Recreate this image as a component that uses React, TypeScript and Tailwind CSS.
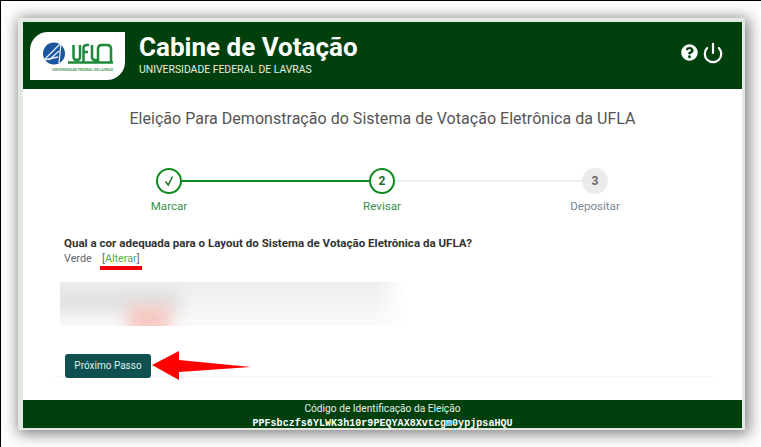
/**
 * Cabine de Votação: passo "Revisar"
 */

import { Power } from 'lucide-react'
import { FaQuestionCircle } from 'react-icons/fa'

function Logo() {
  return (
    <div className="w-[95px] h-[48px] bg-white rounded-tl-[18px] rounded-br-[18px] shrink-0">
      <svg width="95" height="48" viewBox="0 0 95 48">
        <circle cx="24" cy="21.5" r="11" fill="#1a559f" />
        <path d="M14 28 L31 11 L29 31 M19 28 L29 19 M14 28 L28 25" fill="none" stroke="#e8f0f8" strokeWidth="1.3" />
        <path
          d="M43.5 13 V25 Q43.5 28 47 28 Q50 28 50 25 V13 M53.5 30 V16 Q53.5 13 57 13 H59 M53.5 20 H58 M62 13 V25 Q62 28 65 28 H68 V17 Q68 13 72 13 H77 Q81 13 81 17 V30 M38 30.5 H83"
          fill="none"
          stroke="#1c8a3a"
          strokeWidth="2.5"
        />
        <text
          x="22"
          y="38.5"
          fontSize="4"
          fontWeight="700"
          textLength="61"
          lengthAdjust="spacingAndGlyphs"
          fontFamily="Roboto, sans-serif"
          fill="#4f9a5e"
        >
          UNIVERSIDADE FEDERAL DE LAVRAS
        </text>
      </svg>
    </div>
  )
}

function Header() {
  return (
    <header className="h-[67px] bg-[#00400c] flex items-center pl-[7px] pr-[18px] text-white">
      <Logo />
      <div className="ml-[14px] -mt-[3px]">
        <div className="text-[26px] leading-[30px] font-bold">Cabine de Votação</div>
        <div className="mt-[2px] text-[10.4px] leading-[12px] text-[#e6efe6]">UNIVERSIDADE FEDERAL DE LAVRAS</div>
      </div>
      <div className="ml-auto flex items-center gap-[4px] -mt-[6px]">
        <FaQuestionCircle className="w-[17px] h-[17px]" />
        <Power className="w-[22px] h-[22px]" strokeWidth={2.4} />
      </div>
    </header>
  )
}

function Stepper() {
  return (
    <div className="mt-[39px]">
      <div className="flex items-center pl-[133px]">
        <div className="w-[26px] h-[26px] rounded-full border-2 border-[#0f8a1f] flex items-center justify-center">
          <svg width="12" height="12" viewBox="0 0 12 12">
            <path d="M2.5 6.5 L5.2 10 L9.5 1.5" fill="none" stroke="#1b7a2e" strokeWidth="1.5" />
          </svg>
        </div>
        <div className="w-[187px] h-[2px] bg-[#0f8a1f]" />
        <div className="w-[26px] h-[26px] rounded-full border-2 border-[#0f8a1f] flex items-center justify-center text-[12px] font-bold text-[#1b6b2a]">
          2
        </div>
        <div className="w-[187px] h-[2px] bg-[#eeeeee]" />
        <div className="w-[26px] h-[26px] rounded-full bg-[#ebebeb] flex items-center justify-center text-[12px] font-bold text-[#6b6b6b]">
          3
        </div>
      </div>
      <div className="grid grid-cols-[213px_213px_213px] pl-[39.5px] mt-[5px] text-[11.6px] leading-[14px] text-center">
        <div className="text-[#3b8f4a]">Marcar</div>
        <div className="text-[#3b8f4a]">Revisar</div>
        <div className="text-[#7a8790]">Depositar</div>
      </div>
    </div>
  )
}

function BlurredBlock() {
  return (
    <div className="relative ml-[37px] mt-[12px] w-[345px] h-[44px] overflow-hidden bg-gradient-to-b from-[#eeeeee] to-[#fafafa]">
      <div className="absolute left-[-10px] top-[8px] w-[130px] h-[22px] bg-[#e0e0e0] blur-[8px]" />
      <div className="absolute left-[68px] top-[24px] w-[42px] h-[28px] bg-[#f6c6be] blur-[8px]" />
      <div className="absolute right-0 top-0 bottom-0 w-[30px] bg-gradient-to-r from-transparent to-white" />
    </div>
  )
}

function RedArrow() {
  return (
    <svg className="absolute left-[100px] top-[-1px]" width="100" height="30" viewBox="0 0 100 30">
      <path d="M0 14 L27 0 L27 9 L99 16 L27 21 L27 29 Z" fill="#ff0000" />
    </svg>
  )
}

export default function App() {
  return (
    <div
      className="w-[761px] h-[447px] bg-white border-t border-l border-black overflow-hidden pl-[17px] pt-[17px]"
      style={{ fontFamily: 'Roboto, sans-serif' }}
    >
      <div className="w-[727px] h-[412px] bg-white border-t-4 border-r-[3px] border-b-2 border-l-[5px] border-[#e2e8e2] shadow-[2px_2px_14px_2px_rgba(0,0,0,0.5)] flex flex-col">
        <Header />
        <div className="flex-1 flex flex-col">
          <h1 className="mt-[20px] text-center text-[16px] leading-[20px] font-normal tracking-[0.03px] text-[#555555]">
            Eleição Para Demonstração do Sistema de Votação Eletrônica da UFLA
          </h1>

          <Stepper />

          <div className="mt-[23px] pl-[41px]">
            <div className="text-[11.55px] leading-[14px] font-bold text-[#333333]">
              Qual a cor adequada para o Layout do Sistema de Votação Eletrônica da UFLA?
            </div>
            <div className="mt-[2px] text-[10.8px] leading-[13px] text-[#666666] flex">
              <span className="w-[36px]">Verde</span>
              <span className="border-b-4 border-[#f00008] pb-[1px] px-[2px]">
                [<span className="text-[#4caf50]">Alterar</span>]
              </span>
            </div>
          </div>

          <BlurredBlock />

          <div className="mt-[26px] mx-[29px] h-[25px] border-b border-[#f6f6f6] pl-[13px] relative">
            <button
              type="button"
              className="w-[86px] h-[24px] rounded-[3px] bg-[#0f5050] text-[10px] text-[#dff0ee]"
            >
              Próximo Passo
            </button>
            <RedArrow />
          </div>
        </div>

        <footer className="h-[28px] bg-[#00400c] text-white text-center pt-[2px]">
          <div className="text-[10.2px] leading-[13px] text-[#e8efe8]">Código de Identificação da Eleição</div>
          <div
            className="mt-[2px] text-[10px] leading-[13px] font-bold tracking-[0.05px]"
            style={{ fontFamily: '"Liberation Mono", monospace' }}
          >
            PPFsbczfs6YLWK3h10r9PEQYAX8Xvtcgm0ypjpsaHQU
          </div>
        </footer>
      </div>
    </div>
  )
}
